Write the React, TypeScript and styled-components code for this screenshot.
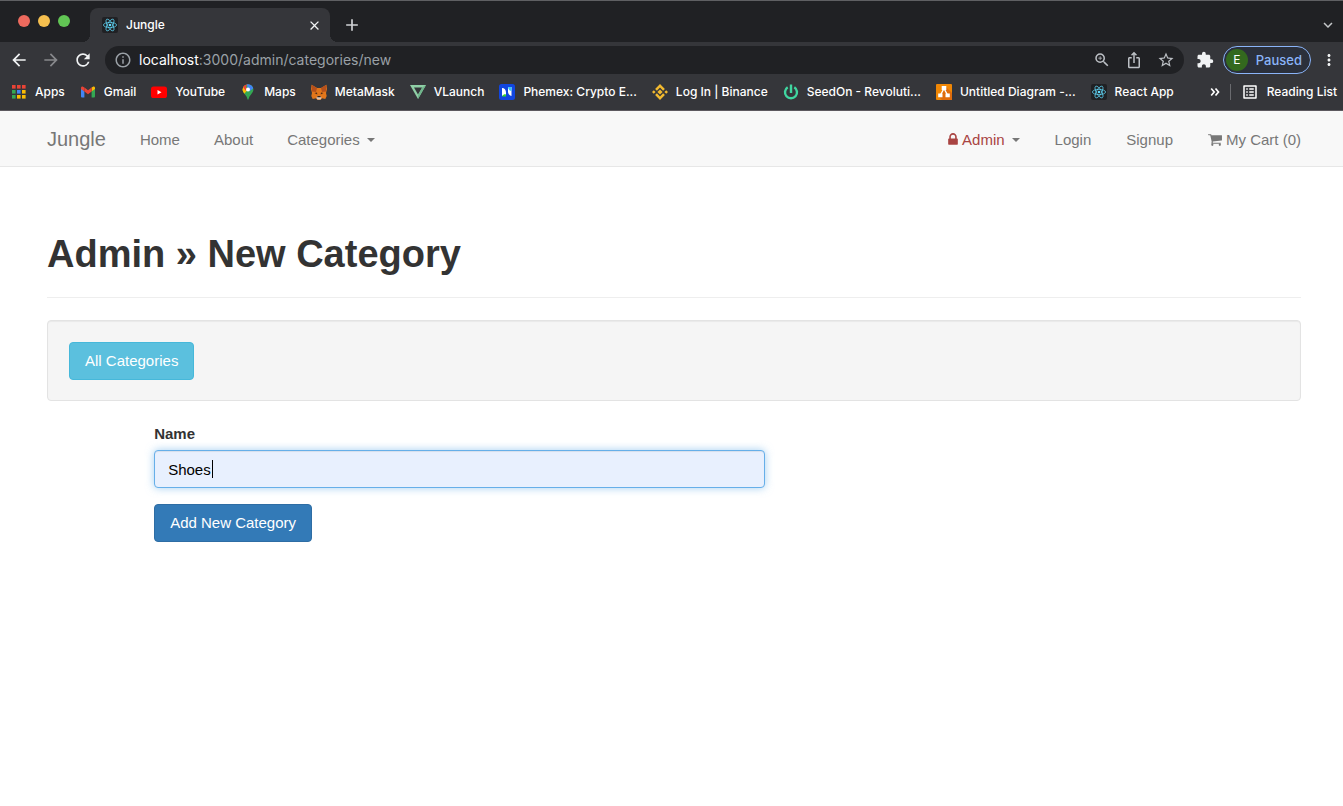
import React from "react";
import styled, { createGlobalStyle } from "styled-components";
import {
  MdAdd,
  MdArrowBack,
  MdArrowForward,
  MdClose,
  MdExtension,
  MdInfoOutline,
  MdIosShare,
  MdKeyboardArrowDown,
  MdMoreVert,
  MdOutlineListAlt,
  MdRefresh,
  MdStarBorder,
  MdZoomIn,
} from "react-icons/md";

const GlobalStyle = createGlobalStyle`
  *, *::before, *::after { box-sizing: border-box; }
  body {
    margin: 0;
    background: #fff;
    color: #333;
    font-family: "Liberation Sans", Arial, sans-serif;
    font-size: 15px;
    line-height: 22px;
  }
  a { text-decoration: none; }
  button { font-family: inherit; cursor: pointer; }
  svg { display: block; flex-shrink: 0; }
`;

/* Browser window */

const Browser = styled.header`
  background: #35363a;
  border-bottom: 1px solid #5c595f;
  color: #fff;
  font-family: Inter, "Liberation Sans", sans-serif;
  font-size: 12px;
  font-weight: 500;
  line-height: 16px;
`;

const TabStrip = styled.div`
  display: flex;
  align-items: flex-end;
  height: 42px;
  padding: 0 6px 0 18px;
  background: #202124;
  border-top: 1px solid #5f6063;
`;

const TrafficLights = styled.div`
  display: flex;
  gap: 8px;
  margin: 0 20px 15px 0;
`;

const Light = styled.span<{ $color: string }>`
  width: 12px;
  height: 12px;
  border-radius: 50%;
  background: ${(p) => p.$color};
`;

const Tab = styled.div`
  position: relative;
  display: flex;
  align-items: center;
  gap: 8px;
  width: 240px;
  height: 34px;
  padding: 0 8px 0 12px;
  border-radius: 8px 8px 0 0;
  background: #35363a;

  &::before,
  &::after {
    content: "";
    position: absolute;
    bottom: 0;
    width: 8px;
    height: 8px;
  }
  &::before {
    right: 100%;
    background: radial-gradient(circle at 0 0, transparent 8px, #35363a 8px);
  }
  &::after {
    left: 100%;
    background: radial-gradient(circle at 100% 0, transparent 8px, #35363a 8px);
  }
`;

const TabTitle = styled.span`
  flex: 1;
`;

const IconButton = styled.button<{ $color?: string }>`
  display: flex;
  align-items: center;
  justify-content: center;
  padding: 0;
  border: 0;
  background: none;
  color: ${(p) => p.$color ?? "#f1f3f4"};
`;

const NewTab = styled(IconButton)`
  height: 34px;
  margin-left: 12px;
`;

const TabSearch = styled(IconButton)`
  height: 34px;
  margin-left: auto;
`;

const Toolbar = styled.div`
  display: flex;
  align-items: center;
  gap: 12px;
  height: 36px;
  padding: 0 5px 0 9px;
`;

const AddressBar = styled.div`
  display: flex;
  flex: 1;
  align-items: center;
  gap: 7px;
  height: 28px;
  padding: 0 9px;
  border-radius: 14px;
  background: #202124;
  color: #9aa0a6;
  font-size: 14px;
  font-weight: 400;
`;

const Url = styled.span`
  flex: 1;
`;

const Host = styled.span`
  color: #fff;
`;

const AddressActions = styled.div`
  display: flex;
  gap: 14px;
`;

const ToolbarEnd = styled.div`
  display: flex;
  align-items: center;
  gap: 9px;
`;

const ProfileButton = styled.button`
  display: flex;
  align-items: center;
  gap: 8px;
  height: 28px;
  padding: 0 8px 0 2px;
  border: 1px solid #8ab4f8;
  border-radius: 14px;
  background: #2b303b;
  color: #8ab4f8;
  font-size: 13px;
  font-weight: 500;
`;

const Avatar = styled.span`
  width: 22px;
  border-radius: 50%;
  background: #33691e;
  color: #fff;
  font-size: 12px;
  font-weight: 400;
  line-height: 22px;
  text-align: center;
`;

const BookmarkBar = styled.nav`
  display: flex;
  align-items: center;
  gap: 15px;
  height: 32px;
  padding: 0 6px 4px 11px;
  white-space: nowrap;
`;

const Bookmark = styled.a`
  display: flex;
  align-items: center;
  gap: 8px;
  color: #fff;
`;

const BookmarkEnd = styled.div`
  display: flex;
  align-items: center;
  gap: 10px;
  margin-left: auto;
`;

const Separator = styled.span`
  width: 1px;
  height: 16px;
  background: #6a6b6f;
`;

/* Site */

const NavBar = styled.nav`
  display: flex;
  align-items: center;
  gap: 34px;
  height: 56px;
  padding: 0 42px 0 47px;
  border-bottom: 1px solid #e7e7e7;
  background: #f8f8f8;
`;

const Brand = styled.a`
  color: #777;
  font-size: 20px;
`;

const NavLink = styled.a<{ $alert?: boolean }>`
  display: flex;
  align-items: center;
  gap: 4px;
  padding-top: 2px;
  color: ${(p) => (p.$alert ? "#a94442" : "#777")};
`;

const NavGroup = styled.div`
  display: flex;
  gap: 35px;
  margin-left: auto;
`;

const Caret = styled.span`
  margin-left: 3px;
  border-top: 4px solid #777;
  border-right: 4px solid transparent;
  border-left: 4px solid transparent;
`;

const Main = styled.main`
  padding: 64px 42px 32px 47px;
`;

const PageHeader = styled.header`
  margin-bottom: 22px;
  padding-bottom: 20px;
  border-bottom: 1px solid #eee;
`;

const Title = styled.h1`
  margin: 0;
  font-size: 38px;
  font-weight: 700;
  line-height: 46px;
`;

const Well = styled.section`
  display: flex;
  margin-bottom: 22px;
  padding: 21px 21px 20px;
  border: 1px solid #e3e3e3;
  border-radius: 4px;
  background: #f5f5f5;
  box-shadow: inset 0 1px 1px rgba(0, 0, 0, 0.05);
`;

const buttonTones = {
  info: { fill: "#5bc0de", edge: "#46b8da" },
  primary: { fill: "#337ab7", edge: "#2e6da4" },
};

const Button = styled.button<{ $tone: keyof typeof buttonTones }>`
  padding: 7px 15px;
  border: 1px solid ${(p) => buttonTones[p.$tone].edge};
  border-radius: 4px;
  background: ${(p) => buttonTones[p.$tone].fill};
  color: #fff;
  font-size: 15px;
  line-height: 22px;
`;

const Row = styled.div`
  display: grid;
  grid-template-columns: repeat(12, 1fr);
  margin: 0 -16px;
`;

const Form = styled.form`
  grid-column: 2 / span 6;
  padding: 0 16px;
`;

const Field = styled.div`
  margin-bottom: 16px;
`;

const Label = styled.label`
  display: block;
  margin-bottom: 5px;
  font-weight: 700;
`;

const InputFrame = styled.div`
  position: relative;
`;

const TextInput = styled.input`
  display: block;
  width: 100%;
  height: 38px;
  padding: 0 13px;
  border: 1px solid #66afe9;
  border-radius: 4px;
  outline: 0;
  background: #e8f0fe;
  box-shadow: inset 0 1px 1px rgba(0, 0, 0, 0.075), 0 0 8px rgba(102, 175, 233, 0.6);
  color: #000;
  caret-color: transparent;
  font-family: inherit;
  font-size: 15px;
`;

const TextCursor = styled.span`
  position: absolute;
  top: 10px;
  left: 58px;
  width: 1px;
  height: 18px;
  background: #000;
`;

/* Favicons */

const ReactIcon = () => (
  <svg width="16" height="16" viewBox="0 0 16 16" fill="none" stroke="#61dafb" strokeWidth="0.7">
    <rect width="16" height="16" rx="2" fill="#202124" stroke="none" />
    <ellipse cx="8" cy="8" rx="6.6" ry="2.6" />
    <ellipse cx="8" cy="8" rx="6.6" ry="2.6" transform="rotate(60 8 8)" />
    <ellipse cx="8" cy="8" rx="6.6" ry="2.6" transform="rotate(120 8 8)" />
    <circle cx="8" cy="8" r="1.3" fill="#61dafb" stroke="none" />
  </svg>
);

const appColors = ["#ea4335", "#ea4335", "#ea4335", "#34a853", "#4285f4", "#fbbc04", "#34a853", "#fbbc04", "#fbbc04"];

const AppsIcon = () => (
  <svg width="16" height="16" viewBox="0 0 16 16">
    {appColors.map((color, i) => (
      <rect key={i} x={1 + (i % 3) * 5} y={1 + Math.floor(i / 3) * 5} width="3.6" height="3.6" fill={color} />
    ))}
  </svg>
);

const GmailIcon = () => (
  <svg width="16" height="16" viewBox="0 0 16 16">
    <path d="M1 4.5v8a1 1 0 0 0 1 1h2.4V7.2L1 4.5z" fill="#4285f4" />
    <path d="M15 4.5v8a1 1 0 0 1-1 1h-2.4V7.2L15 4.5z" fill="#34a853" />
    <path d="M11.6 3.6 13 2.7c.9-.5 2 .1 2 1.2v1l-3.4 2.6z" fill="#fbbc04" />
    <path d="M4.4 3.5 8 6.3l3.6-2.8v4L8 10.3 4.4 7.5z" fill="#ea4335" />
    <path d="M1 4.9v-1c0-1.1 1.1-1.7 2-1.2l1.4.9v3.9z" fill="#ea4335" />
  </svg>
);

const YouTubeIcon = () => (
  <svg width="16" height="16" viewBox="0 0 16 16">
    <rect y="2.5" width="16" height="11.5" rx="2.6" fill="#f00" />
    <path d="M6.5 5.9v4.7l4-2.35z" fill="#fff" />
  </svg>
);

const MapsIcon = () => (
  <svg width="16" height="16" viewBox="0 0 16 16">
    <defs>
      <clipPath id="pin">
        <path d="M8 .2a5.4 5.4 0 0 0-5.4 5.4c0 2 1 3.2 2.2 4.7C6.2 12 7 13.2 7.4 15c.1.5.3.8.6.8s.5-.3.6-.8c.4-1.8 1.2-3 2.600-4.700 1.200-1.500 2.200-2.700 2.200-4.700A5.400 5.400 0 0 0 8 .2z" />
      </clipPath>
    </defs>
    <g clipPath="url(#pin)">
      <rect width="16" height="16" fill="#34a853" />
      <path d="M0 0h8L2 7.5H0z" fill="#ea4335" />
      <path d="M6.5 0H16v2.5l-7 5z" fill="#4285f4" />
      <path d="M3.8 2 8 5.6 3.600 10.500 1 8z" fill="#fbbc04" />
      <path d="M2 1.5 4.500 1 8 5.600 5.500 6.500z" fill="#ea4335" />
    </g>
    <circle cx="8" cy="5.6" r="2" fill="#fff" />
  </svg>
);

const FoxIcon = () => (
  <svg width="16" height="16" viewBox="0 0 16 16">
    <path d="M.6.8 6 4h4L15.400.8 16 5l-1 4 .7 3-1.400 3-3.300-.7L9.500 16h-3L5 14.300 1.700 15 .3 12 1 9 0 5z" fill="#e2761b" />
    <path d="M.6.8 6 4 5 8 1 7.500z" fill="#b5501c" />
    <path d="M15.400.8 10 4l1 4 4-.5z" fill="#b5501c" />
    <path d="M3.500 9 6 8.500l.3 2zM12.500 9 10 8.500l-.3 2z" fill="#4b2a18" />
    <path d="M6 12.500h4l.5 1.500-1 1.500h-3L5.500 14z" fill="#d9c6b8" />
    <path d="M6.500 12h3l.3 1.200H6.200z" fill="#3b2418" />
  </svg>
);

const VLaunchIcon = () => (
  <svg width="16" height="16" viewBox="0 0 16 16">
    <path d="M0 1h16L8 15z" fill="#8fcfa6" />
    <path d="M4 3.600h8.200L8 10.600z" fill="#35363a" />
    <path d="M8 15V11l4.200-7.600L16 1z" fill="#6fb58b" />
  </svg>
);

const PhemexIcon = () => (
  <svg width="16" height="16" viewBox="0 0 16 16">
    <rect width="16" height="16" rx="2.500" fill="#1146e0" />
    <path d="M3 4c2.500 0 4 2 4 4.500V12H3z" fill="#fff" />
    <path d="M3 12.500h4V10.500C5.500 10 4.500 10.500 3 12z" fill="#3ad12f" />
    <path d="M9 3h3.500v9C10.500 11.500 9 10 9 7.500z" fill="#fff" />
    <path d="M9 3h3.500v4C11 7 9.500 6 9 3z" fill="#38c6f4" />
  </svg>
);

const BinanceIcon = () => (
  <svg width="16" height="16" viewBox="0 0 16 16" fill="#f3ba2f">
    <path d="M8 0 3.100 4.900l1.800 1.800L8 3.600l3.100 3.100 1.800-1.800z" />
    <path d="m8 16 4.900-4.900-1.800-1.800L8 12.400 4.900 9.300l-1.800 1.800z" />
    <path d="m0 8 1.800-1.800L3.600 8 1.800 9.800zM12.400 8l1.800-1.800L16 8l-1.800 1.800z" />
    <path d="M8 5.400 10.600 8 8 10.600 5.400 8z" />
  </svg>
);

const SeedOnIcon = () => (
  <svg width="16" height="16" viewBox="0 0 16 16" fill="none" stroke="#40d6a0" strokeWidth="2.400">
    <path d="M4.700 3.300a6 6 0 1 0 6.600 0" />
    <path d="M8 .5V9" />
  </svg>
);

const DiagramIcon = () => (
  <svg width="16" height="16" viewBox="0 0 16 16">
    <rect width="16" height="16" rx="1" fill="#f08705" />
    <path d="m10 3 6 6v7H6l-3-3z" fill="#df6c0c" />
    <path d="M8 4.500 4.500 11M8 4.500l3.500 6.500" stroke="#fff" strokeWidth="1.400" />
    <path d="M5.700 2h4.600v4H5.700zM2.200 9.500h4.300v3.800H2.200zM9.500 9.500h4.300v3.800H9.500z" fill="#fff" />
  </svg>
);

const MoreIcon = () => (
  <svg width="10" height="10" viewBox="0 0 10 10" fill="none" stroke="#fff" strokeWidth="1.700">
    <path d="m1.200 1.500 3 3.500-3 3.500M5.500 1.500l3 3.500-3 3.500" />
  </svg>
);

const LockIcon = () => (
  <svg width="10" height="15" viewBox="320 0 1152 1792" fill="currentColor">
    <path d="M640 768h512v-192q0-106-75-181t-181-75-181 75-75 181v192zm832 96v576q0 40-28 68t-68 28h-960q-40 0-68-28t-28-68v-576q0-40 28-68t68-28h32v-192q0-184 132-316t316-132 316 132 132 316v192h32q40 0 68 28t28 68z" />
  </svg>
);

const CartIcon = () => (
  <svg width="14" height="15" viewBox="64 0 1664 1792" fill="currentColor">
    <path d="M704 1536q0 52-38 90t-90 38-90-38-38-90 38-90 90-38 90 38 38 90zm896 0q0 52-38 90t-90 38-90-38-38-90 38-90 90-38 90 38 38 90zm128-1088v512q0 24-16.500 42.500t-40.500 21.500l-1044 122q13 60 13 70 0 16-24 64h920q26 0 45 19t19 45-19 45-45 19h-1024q-26 0-45-19t-19-45q0-11 8-31.500t16-36 21.500-40 15.500-29.500l-177-823h-204q-26 0-45-19t-19-45 19-45 45-19h256q16 0 28.500 6.500t19.500 15.500 13 24.500 8 26 5.500 29.500 4.500 26h1201q26 0 45 19t19 45z" />
  </svg>
);

const bookmarks: [string, React.FC][] = [
  ["Apps", AppsIcon],
  ["Gmail", GmailIcon],
  ["YouTube", YouTubeIcon],
  ["Maps", MapsIcon],
  ["MetaMask", FoxIcon],
  ["VLaunch", VLaunchIcon],
  ["Phemex: Crypto E...", PhemexIcon],
  ["Log In | Binance", BinanceIcon],
  ["SeedOn - Revoluti...", SeedOnIcon],
  ["Untitled Diagram -...", DiagramIcon],
  ["React App", ReactIcon],
];

export default function App() {
  return (
    <>
      <GlobalStyle />
      <Browser>
        <TabStrip>
          <TrafficLights>
            <Light $color="#ed6a5e" />
            <Light $color="#f5bf4f" />
            <Light $color="#61c554" />
          </TrafficLights>
          <Tab>
            <ReactIcon />
            <TabTitle>Jungle</TabTitle>
            <IconButton aria-label="Close tab">
              <MdClose size={15} stroke="currentColor" />
            </IconButton>
          </Tab>
          <NewTab aria-label="New tab" $color="#d0d2d5">
            <MdAdd size={20} />
          </NewTab>
          <TabSearch aria-label="Search tabs" $color="#c4c7c9">
            <MdKeyboardArrowDown size={18} />
          </TabSearch>
        </TabStrip>
        <Toolbar>
          <IconButton aria-label="Back">
            <MdArrowBack size={20} />
          </IconButton>
          <IconButton aria-label="Forward" $color="#88898c">
            <MdArrowForward size={20} />
          </IconButton>
          <IconButton aria-label="Reload">
            <MdRefresh size={20} />
          </IconButton>
          <AddressBar>
            <MdInfoOutline size={18} />
            <Url>
              <Host>localhost</Host>:3000/admin/categories/new
            </Url>
            <AddressActions>
              <IconButton aria-label="Zoom" $color="#bdc1c6">
                <MdZoomIn size={18} />
              </IconButton>
              <IconButton aria-label="Share" $color="#bdc1c6">
                <MdIosShare size={18} />
              </IconButton>
              <IconButton aria-label="Bookmark this page" $color="#bdc1c6">
                <MdStarBorder size={18} />
              </IconButton>
            </AddressActions>
          </AddressBar>
          <ToolbarEnd>
            <IconButton aria-label="Extensions">
              <MdExtension size={18} />
            </IconButton>
            <ProfileButton>
              <Avatar>E</Avatar>
              Paused
            </ProfileButton>
            <IconButton aria-label="Menu">
              <MdMoreVert size={18} />
            </IconButton>
          </ToolbarEnd>
        </Toolbar>
        <BookmarkBar>
          {bookmarks.map(([name, Icon]) => (
            <Bookmark href="#" key={name}>
              <Icon />
              {name}
            </Bookmark>
          ))}
          <BookmarkEnd>
            <IconButton aria-label="More bookmarks">
              <MoreIcon />
            </IconButton>
            <Separator />
            <Bookmark href="#">
              <MdOutlineListAlt size={18} />
              Reading List
            </Bookmark>
          </BookmarkEnd>
        </BookmarkBar>
      </Browser>

      <NavBar>
        <Brand href="#">Jungle</Brand>
        <NavLink href="#">Home</NavLink>
        <NavLink href="#">About</NavLink>
        <NavLink href="#">
          Categories
          <Caret />
        </NavLink>
        <NavGroup>
          <NavLink href="#" $alert>
            <LockIcon />
            Admin
            <Caret />
          </NavLink>
          <NavLink href="#">Login</NavLink>
          <NavLink href="#">Signup</NavLink>
          <NavLink href="#">
            <CartIcon />
            My Cart (0)
          </NavLink>
        </NavGroup>
      </NavBar>

      <Main>
        <PageHeader>
          <Title>Admin » New Category</Title>
        </PageHeader>
        <Well>
          <Button type="button" $tone="info">
            All Categories
          </Button>
        </Well>
        <Row>
          <Form onSubmit={(e) => e.preventDefault()}>
            <Field>
              <Label htmlFor="category-name">Name</Label>
              <InputFrame>
                <TextInput id="category-name" type="text" defaultValue="Shoes" />
                <TextCursor />
              </InputFrame>
            </Field>
            <Button type="submit" $tone="primary">
              Add New Category
            </Button>
          </Form>
        </Row>
      </Main>
    </>
  );
}
